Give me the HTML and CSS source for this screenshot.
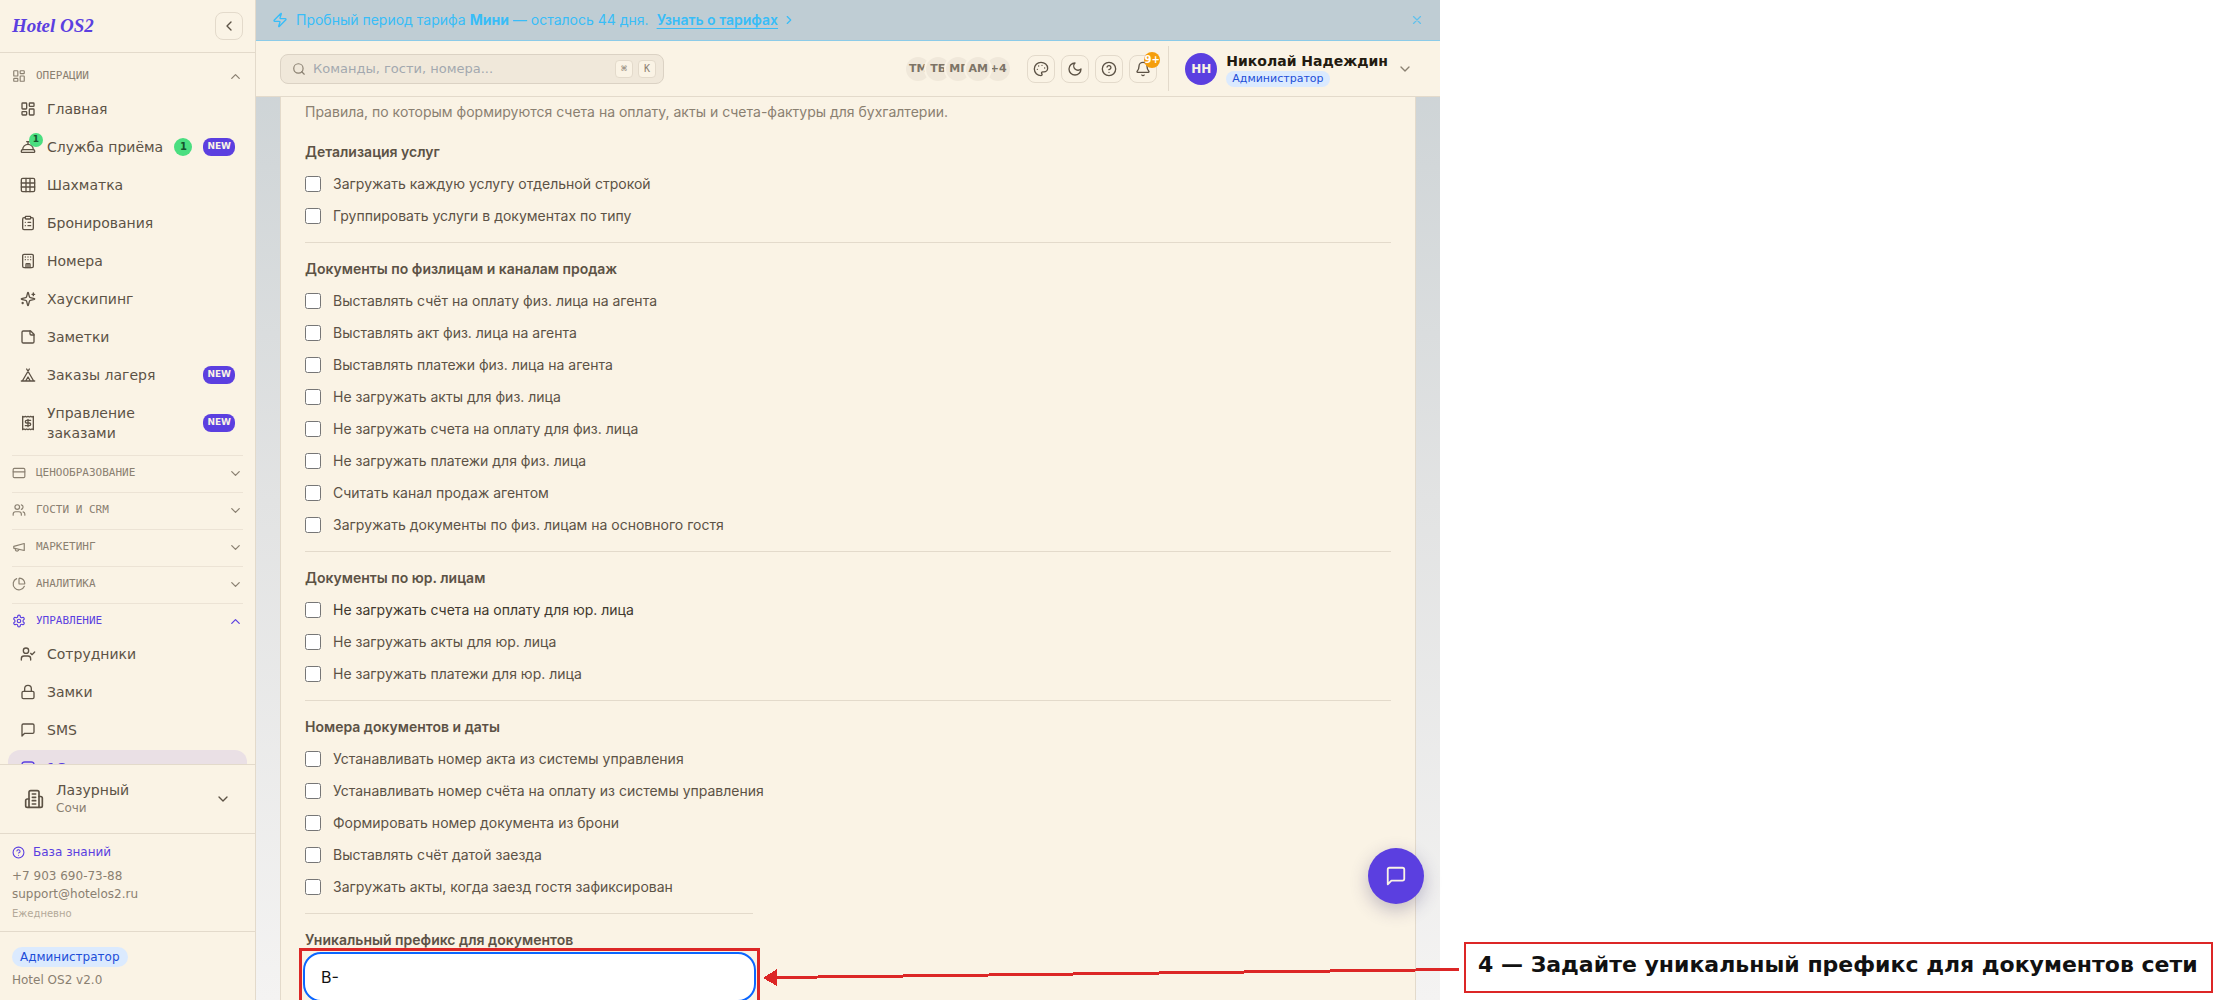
FILE: index.html
```
<!DOCTYPE html>
<html lang="ru">

<head>
    <meta charset="UTF-8" />
    <meta name="viewport" content="width=device-width, initial-scale=1.0" />
    <title>Hotel OS2</title>
    <link rel="stylesheet" href="styles.css">
</head>

<body>
    <svg class="sprite" aria-hidden="true">
        <symbol id="i-dashboard" viewBox="0 0 24 24"><rect x="3" y="3" width="7" height="9" rx="1"/><rect x="14" y="3" width="7" height="5" rx="1"/><rect x="14" y="12" width="7" height="9" rx="1"/><rect x="3" y="16" width="7" height="5" rx="1"/></symbol>
        <symbol id="i-bell-desk" viewBox="0 0 24 24"><path d="M3 20a1 1 0 0 1-1-1v-1a2 2 0 0 1 2-2h16a2 2 0 0 1 2 2v1a1 1 0 0 1-1 1Z"/><path d="M20 16a8 8 0 1 0-16 0"/><path d="M12 4v4"/><path d="M10 4h4"/></symbol>
        <symbol id="i-grid" viewBox="0 0 24 24"><rect x="2" y="2" width="20" height="20" rx="2"/><path d="M2 9h20M2 15h20M9 2v20M15 2v20"/></symbol>
        <symbol id="i-clipboard" viewBox="0 0 24 24"><rect x="8" y="2" width="8" height="4" rx="1"/><path d="M16 4h2a2 2 0 0 1 2 2v14a2 2 0 0 1-2 2H6a2 2 0 0 1-2-2V6a2 2 0 0 1 2-2h2"/><path d="M12 11h4M12 16h4M8 11h.01M8 16h.01"/></symbol>
        <symbol id="i-hotel" viewBox="0 0 24 24"><rect x="4" y="2" width="16" height="20" rx="2"/><path d="M9 22v-5a1 1 0 0 1 1-1h4a1 1 0 0 1 1 1v5M12 16v6M8 6h.01M12 6h.01M16 6h.01M8 10h.01M12 10h.01M16 10h.01"/></symbol>
        <symbol id="i-sparkles" viewBox="0 0 24 24"><path d="M9.94 15.5A2 2 0 0 0 8.5 14.06l-6.13-1.58a.5.5 0 0 1 0-.96L8.5 9.94A2 2 0 0 0 9.94 8.5l1.58-6.13a.5.5 0 0 1 .96 0l1.58 6.13a2 2 0 0 0 1.44 1.44l6.13 1.58a.5.5 0 0 1 0 .96l-6.13 1.58a2 2 0 0 0-1.44 1.44l-1.58 6.13a.5.5 0 0 1-.96 0z"/><path d="M20 3v4M22 5h-4M4 17v2M5 18H3"/></symbol>
        <symbol id="i-note" viewBox="0 0 24 24"><path d="M16 3H5a2 2 0 0 0-2 2v14a2 2 0 0 0 2 2h14a2 2 0 0 0 2-2V8Z"/><path d="M15 3v4a2 2 0 0 0 2 2h4"/></symbol>
        <symbol id="i-tent" viewBox="0 0 24 24"><path d="M3.5 21 14 3M20.5 21 10 3M15.5 21 12 15l-3.5 6M2 21h20"/></symbol>
        <symbol id="i-receipt" viewBox="0 0 24 24"><path d="M4 2v20l2-1 2 1 2-1 2 1 2-1 2 1 2-1 2 1V2l-2 1-2-1-2 1-2-1-2 1-2-1-2 1Z"/><path d="M16 8h-6a2 2 0 1 0 0 4h4a2 2 0 1 1 0 4H8M12 17.500V6.500"/></symbol>
        <symbol id="i-card" viewBox="0 0 24 24"><rect x="2" y="4" width="20" height="16" rx="2"/><path d="M2 10h20"/></symbol>
        <symbol id="i-users" viewBox="0 0 24 24"><path d="M16 21v-2a4 4 0 0 0-4-4H6a4 4 0 0 0-4 4v2"/><circle cx="9" cy="7" r="4"/><path d="M22 21v-2a4 4 0 0 0-3-3.870M16 3.130a4 4 0 0 1 0 7.750"/></symbol>
        <symbol id="i-megaphone" viewBox="0 0 24 24"><path d="m3 11 18-5v12L3 14v-3z"/><path d="M11.600 16.800a3 3 0 1 1-5.800-1.600"/></symbol>
        <symbol id="i-pie" viewBox="0 0 24 24"><path d="M21 12c.55 0 1-.45.95-1a10 10 0 0 0-8.950-8.950c-.55-.06-1 .4-1 .95v8a1 1 0 0 0 1 1z"/><path d="M21.210 15.890A10 10 0 1 1 8 2.830"/></symbol>
        <symbol id="i-gear" viewBox="0 0 24 24"><path d="M12.220 2h-.44a2 2 0 0 0-2 2v.18a2 2 0 0 1-1 1.730l-.43.25a2 2 0 0 1-2 0l-.15-.08a2 2 0 0 0-2.730.73l-.22.38a2 2 0 0 0 .73 2.730l.15.1a2 2 0 0 1 1 1.720v.51a2 2 0 0 1-1 1.740l-.15.09a2 2 0 0 0-.73 2.730l.22.38a2 2 0 0 0 2.730.73l.15-.08a2 2 0 0 1 2 0l.43.25a2 2 0 0 1 1 1.730V20a2 2 0 0 0 2 2h.44a2 2 0 0 0 2-2v-.18a2 2 0 0 1 1-1.730l.43-.25a2 2 0 0 1 2 0l.15.08a2 2 0 0 0 2.730-.73l.22-.39a2 2 0 0 0-.73-2.730l-.15-.08a2 2 0 0 1-1-1.740v-.5a2 2 0 0 1 1-1.740l.15-.09a2 2 0 0 0 .73-2.730l-.22-.38a2 2 0 0 0-2.730-.73l-.15.08a2 2 0 0 1-2 0l-.43-.25a2 2 0 0 1-1-1.730V4a2 2 0 0 0-2-2z"/><circle cx="12" cy="12" r="3"/></symbol>
        <symbol id="i-user-check" viewBox="0 0 24 24"><path d="M16 21v-2a4 4 0 0 0-4-4H6a4 4 0 0 0-4 4v2"/><circle cx="9" cy="7" r="4"/><path d="m16 11 2 2 4-4"/></symbol>
        <symbol id="i-lock" viewBox="0 0 24 24"><rect x="3" y="11" width="18" height="11" rx="2"/><path d="M7 11V7a5 5 0 0 1 10 0v4"/></symbol>
        <symbol id="i-message" viewBox="0 0 24 24"><path d="M21 15a2 2 0 0 1-2 2H7l-4 4V5a2 2 0 0 1 2-2h14a2 2 0 0 1 2 2z"/></symbol>
        <symbol id="i-database" viewBox="0 0 24 24"><rect x="3" y="3" width="18" height="18" rx="4"/><path d="M3 12h18"/></symbol>
        <symbol id="i-building" viewBox="0 0 24 24"><path d="M6 22V4a2 2 0 0 1 2-2h8a2 2 0 0 1 2 2v18Z"/><path d="M6 12H4a2 2 0 0 0-2 2v6a2 2 0 0 0 2 2h2M18 9h2a2 2 0 0 1 2 2v9a2 2 0 0 1-2 2h-2M10 6h4M10 10h4M10 14h4M10 18h4"/></symbol>
        <symbol id="i-help" viewBox="0 0 24 24"><circle cx="12" cy="12" r="10"/><path d="M9.090 9a3 3 0 0 1 5.830 1c0 2-3 3-3 3M12 17h.01"/></symbol>
        <symbol id="i-up" viewBox="0 0 24 24"><path d="m18 15-6-6-6 6"/></symbol>
        <symbol id="i-down" viewBox="0 0 24 24"><path d="m6 9 6 6 6-6"/></symbol>
        <symbol id="i-left" viewBox="0 0 24 24"><path d="m15 18-6-6 6-6"/></symbol>
        <symbol id="i-right" viewBox="0 0 24 24"><path d="m9 18 6-6-6-6"/></symbol>
        <symbol id="i-close" viewBox="0 0 24 24"><path d="M18 6 6 18M6 6l12 12"/></symbol>
        <symbol id="i-zap" viewBox="0 0 24 24"><path d="M4 14a1 1 0 0 1-.78-1.630l9.900-10.200a.5.5 0 0 1 .86.46l-1.920 6.020A1 1 0 0 0 13 10h7a1 1 0 0 1 .78 1.630l-9.900 10.200a.5.5 0 0 1-.86-.46l1.920-6.020A1 1 0 0 0 11 14z"/></symbol>
        <symbol id="i-search" viewBox="0 0 24 24"><circle cx="11" cy="11" r="8"/><path d="m21 21-4.300-4.300"/></symbol>
        <symbol id="i-palette" viewBox="0 0 24 24"><path d="M12 2C6.500 2 2 6.500 2 12s4.500 10 10 10c.93 0 1.650-.75 1.650-1.690 0-.44-.18-.83-.44-1.120-.29-.29-.44-.65-.44-1.130a1.640 1.640 0 0 1 1.670-1.670h2c3.050 0 5.550-2.500 5.550-5.550C21.970 6.010 17.460 2 12 2z"/><path d="M13.500 6.500h.01M17.500 10.500h.01M8.500 7.500h.01M6.500 12.500h.01"/></symbol>
        <symbol id="i-moon" viewBox="0 0 24 24"><path d="M12 3a6 6 0 0 0 9 9 9 9 0 1 1-9-9Z"/></symbol>
        <symbol id="i-bell" viewBox="0 0 24 24"><path d="M10.270 21a2 2 0 0 0 3.460 0M3.260 15.330A1 1 0 0 0 4 17h16a1 1 0 0 0 .74-1.670C19.410 13.960 18 12.500 18 8A6 6 0 0 0 6 8c0 4.500-1.410 5.960-2.740 7.330"/></symbol>
    </svg>

    <div class="page">
        <div class="app">
            <aside class="sidebar">
                <div class="brand">
                    <a href="#" class="logo">Hotel OS2</a>
                    <button type="button" class="collapse-btn" aria-label="Свернуть меню"><svg class="icon"><use href="#i-left"/></svg></button>
                </div>

                <nav class="menu">
                    <div class="menu-section">
                        <button type="button" class="section-btn"><svg class="icon"><use href="#i-dashboard"/></svg><span>ОПЕРАЦИИ</span><svg class="icon arrow"><use href="#i-up"/></svg></button>
                        <a href="#" class="menu-item"><svg class="icon"><use href="#i-dashboard"/></svg><span>Главная</span></a>
                        <a href="#" class="menu-item"><svg class="icon"><use href="#i-bell-desk"/></svg><i class="dot">1</i><span>Служба приёма</span><b class="count">1</b><b class="new">NEW</b></a>
                        <a href="#" class="menu-item"><svg class="icon"><use href="#i-grid"/></svg><span>Шахматка</span></a>
                        <a href="#" class="menu-item"><svg class="icon"><use href="#i-clipboard"/></svg><span>Бронирования</span></a>
                        <a href="#" class="menu-item"><svg class="icon"><use href="#i-hotel"/></svg><span>Номера</span></a>
                        <a href="#" class="menu-item"><svg class="icon"><use href="#i-sparkles"/></svg><span>Хаускипинг</span></a>
                        <a href="#" class="menu-item"><svg class="icon"><use href="#i-note"/></svg><span>Заметки</span></a>
                        <a href="#" class="menu-item"><svg class="icon"><use href="#i-tent"/></svg><span>Заказы лагеря</span><b class="new">NEW</b></a>
                        <a href="#" class="menu-item"><svg class="icon"><use href="#i-receipt"/></svg><span>Управление заказами</span><b class="new">NEW</b></a>
                    </div>
                    <div class="menu-section">
                        <button type="button" class="section-btn"><svg class="icon"><use href="#i-card"/></svg><span>ЦЕНООБРАЗОВАНИЕ</span><svg class="icon arrow"><use href="#i-down"/></svg></button>
                    </div>
                    <div class="menu-section">
                        <button type="button" class="section-btn"><svg class="icon"><use href="#i-users"/></svg><span>ГОСТИ И CRM</span><svg class="icon arrow"><use href="#i-down"/></svg></button>
                    </div>
                    <div class="menu-section">
                        <button type="button" class="section-btn"><svg class="icon"><use href="#i-megaphone"/></svg><span>МАРКЕТИНГ</span><svg class="icon arrow"><use href="#i-down"/></svg></button>
                    </div>
                    <div class="menu-section">
                        <button type="button" class="section-btn"><svg class="icon"><use href="#i-pie"/></svg><span>АНАЛИТИКА</span><svg class="icon arrow"><use href="#i-down"/></svg></button>
                    </div>
                    <div class="menu-section">
                        <button type="button" class="section-btn current"><svg class="icon"><use href="#i-gear"/></svg><span>УПРАВЛЕНИЕ</span><svg class="icon arrow"><use href="#i-up"/></svg></button>
                        <a href="#" class="menu-item"><svg class="icon"><use href="#i-user-check"/></svg><span>Сотрудники</span></a>
                        <a href="#" class="menu-item"><svg class="icon"><use href="#i-lock"/></svg><span>Замки</span></a>
                        <a href="#" class="menu-item"><svg class="icon"><use href="#i-message"/></svg><span>SMS</span></a>
                        <a href="#" class="menu-item active"><svg class="icon"><use href="#i-database"/></svg><span>1С</span></a>
                    </div>
                </nav>

                <button type="button" class="hotel-btn">
                    <svg class="icon"><use href="#i-building"/></svg>
                    <span class="hotel-name">Лазурный<small>Сочи</small></span>
                    <svg class="icon arrow"><use href="#i-down"/></svg>
                </button>

                <div class="support">
                    <a href="#" class="kb-link"><svg class="icon"><use href="#i-help"/></svg>База знаний</a>
                    <a href="tel:+79036907388">+7 903 690-73-88</a>
                    <a href="mailto:support@hotelos2.ru">support@hotelos2.ru</a>
                    <small>Ежедневно</small>
                </div>

                <div class="version">
                    <span class="role">Администратор</span>
                    <span>Hotel OS2 v2.0</span>
                </div>
            </aside>

            <div class="content">
                <div class="trial">
                    <svg class="icon"><use href="#i-zap"/></svg>
                    <span>Пробный период тарифа <b>Мини</b> — осталось 44 дня.</span>
                    <a href="#">Узнать о тарифах</a>
                    <svg class="icon trial-arrow"><use href="#i-right"/></svg>
                    <button type="button" aria-label="Закрыть"><svg class="icon"><use href="#i-close"/></svg></button>
                </div>

                <header class="topbar">
                    <div class="search">
                        <svg class="icon"><use href="#i-search"/></svg>
                        <input type="text" aria-label="Поиск" placeholder="Команды, гости, номера..." />
                        <kbd>⌘</kbd>
                        <kbd>K</kbd>
                    </div>
                    <div class="people">
                        <span>ТМ</span><span>ТБ</span><span>МГ</span><span class="front">АМ</span><span>+4</span>
                    </div>
                    <div class="tools">
                        <button type="button" aria-label="Тема"><svg class="icon"><use href="#i-palette"/></svg></button>
                        <button type="button" aria-label="Ночной режим"><svg class="icon"><use href="#i-moon"/></svg></button>
                        <button type="button" aria-label="Помощь"><svg class="icon"><use href="#i-help"/></svg></button>
                        <button type="button" aria-label="Уведомления"><svg class="icon"><use href="#i-bell"/></svg><i class="alert">9+</i></button>
                    </div>
                    <button type="button" class="user">
                        <span class="avatar">НН</span>
                        <span class="user-info"><b>Николай Надеждин</b><span class="role">Администратор</span></span>
                        <svg class="icon"><use href="#i-down"/></svg>
                    </button>
                </header>

                <main class="workspace">
                    <form class="card">
                        <p class="intro">Правила, по которым формируются счета на оплату, акты и счета-фактуры для бухгалтерии.</p>

                        <fieldset>
                            <legend>Детализация услуг</legend>
                            <label><input type="checkbox" />Загружать каждую услугу отдельной строкой</label>
                            <label><input type="checkbox" />Группировать услуги в документах по типу</label>
                        </fieldset>

                        <fieldset>
                            <legend>Документы по физлицам и каналам продаж</legend>
                            <label><input type="checkbox" />Выставлять счёт на оплату физ. лица на агента</label>
                            <label><input type="checkbox" />Выставлять акт физ. лица на агента</label>
                            <label><input type="checkbox" />Выставлять платежи физ. лица на агента</label>
                            <label><input type="checkbox" />Не загружать акты для физ. лица</label>
                            <label><input type="checkbox" />Не загружать счета на оплату для физ. лица</label>
                            <label><input type="checkbox" />Не загружать платежи для физ. лица</label>
                            <label><input type="checkbox" />Считать канал продаж агентом</label>
                            <label><input type="checkbox" />Загружать документы по физ. лицам на основного гостя</label>
                        </fieldset>

                        <fieldset>
                            <legend>Документы по юр. лицам</legend>
                            <label class="hovered"><input type="checkbox" />Не загружать счета на оплату для юр. лица</label>
                            <label><input type="checkbox" />Не загружать акты для юр. лица</label>
                            <label><input type="checkbox" />Не загружать платежи для юр. лица</label>
                        </fieldset>

                        <fieldset>
                            <legend>Номера документов и даты</legend>
                            <label><input type="checkbox" />Устанавливать номер акта из системы управления</label>
                            <label><input type="checkbox" />Устанавливать номер счёта на оплату из системы управления</label>
                            <label><input type="checkbox" />Формировать номер документа из брони</label>
                            <label><input type="checkbox" />Выставлять счёт датой заезда</label>
                            <label><input type="checkbox" />Загружать акты, когда заезд гостя зафиксирован</label>
                        </fieldset>

                        <div class="prefix">
                            <label for="prefix">Уникальный префикс для документов</label>
                            <div class="prefix-field">
                                <input type="text" id="prefix" value="В-" />
                            </div>
                        </div>
                    </form>
                </main>

                <button type="button" class="chat-btn" aria-label="Чат"><svg class="icon"><use href="#i-message"/></svg></button>
            </div>
        </div>

        <aside class="notes">
            <svg class="pointer" viewBox="0 0 696 18" preserveAspectRatio="none" aria-hidden="true">
                <path d="M12 9.500 696 1.500" />
                <polygon points="0,10 14,1 14,18" />
            </svg>
            <p class="note">4 — Задайте уникальный префикс для документов сети</p>
        </aside>
    </div>
</body>

</html>
```
FILE: styles.css
```
* {
    box-sizing: border-box;
}

body {
    margin: 0;
    background: #fff;
    color: #5c5245;
    font-family: "DejaVu Sans", sans-serif;
    font-size: 14px;
    line-height: 20px;
}

a {
    color: inherit;
    text-decoration: none;
}

button {
    font: inherit;
    color: inherit;
    background: none;
    border: none;
    padding: 0;
    cursor: pointer;
}

.sprite {
    display: none;
}

.icon {
    width: 16px;
    height: 16px;
    flex: none;
    fill: none;
    stroke: currentColor;
    stroke-width: 2;
    stroke-linecap: round;
    stroke-linejoin: round;
}

.page {
    position: relative;
    display: flex;
    height: 100vh;
    overflow: hidden;
}

.app {
    flex: 1;
    min-width: 0;
    display: flex;
}

/* Sidebar */

.sidebar {
    width: 256px;
    flex: none;
    display: flex;
    flex-direction: column;
    background: #faf3e5;
    border-right: 1px solid #e3dacb;
}

.brand {
    display: flex;
    align-items: center;
    justify-content: space-between;
    height: 53px;
    flex: none;
    padding: 0 12px;
    border-bottom: 1px solid #e3dacb;
}

.logo {
    color: #5b3fe0;
    font-family: "Liberation Serif", serif;
    font-size: 19px;
    font-weight: bold;
    font-style: italic;
}

.collapse-btn {
    display: flex;
    align-items: center;
    justify-content: center;
    width: 28px;
    height: 28px;
    border: 1px solid #e3dacb;
    border-radius: 8px;
}

.menu {
    flex: 1;
    min-height: 0;
    overflow: hidden;
    padding: 8px 8px 0;
}

.menu-section {
    padding: 2px 0 4px;
}

.menu-section:first-child {
    padding-top: 0;
}

.menu-section + .menu-section {
    margin: 0 4px;
    border-top: 1px solid #ece3d5;
}

.menu-section + .menu-section .section-btn {
    padding: 0;
}

.menu-section + .menu-section .menu-item {
    margin-left: -4px;
    margin-right: -4px;
}

.section-btn {
    display: flex;
    align-items: center;
    gap: 10px;
    width: 100%;
    height: 30px;
    padding: 0 4px;
    color: #8a8071;
    font-family: "DejaVu Sans Mono", monospace;
    font-size: 11px;
    text-align: left;
}

.section-btn .icon {
    width: 14px;
    height: 14px;
}

.section-btn .arrow {
    width: 15px;
    height: 15px;
    margin-left: auto;
}

.section-btn.current {
    color: #5b3fe0;
}

.menu-item {
    position: relative;
    display: flex;
    align-items: center;
    gap: 11px;
    min-height: 36px;
    margin-bottom: 2px;
    padding: 8px 12px;
    border-radius: 12px;
}

.menu-item:last-child {
    margin-bottom: 0;
}

.menu-item span {
    flex: 1;
}

.menu-item.active {
    background: #eae0e5;
    color: #5b3fe0;
}

.dot {
    position: absolute;
    top: 4px;
    left: 21px;
    width: 14px;
    height: 14px;
    border-radius: 7px;
    background: #4ade80;
    color: #14532d;
    font-size: 9px;
    font-style: normal;
    font-weight: bold;
    line-height: 12px;
    text-align: center;
}

.count {
    width: 18px;
    height: 18px;
    border-radius: 9px;
    background: #4ade80;
    color: #14532d;
    font-size: 10px;
    line-height: 18px;
    text-align: center;
}

.new {
    height: 18px;
    padding: 0 4px;
    border-radius: 8px;
    background: #5b3fe0;
    color: #faf3e5;
    font-size: 9px;
    line-height: 16px;
}

.hotel-btn {
    display: flex;
    align-items: center;
    gap: 12px;
    height: 70px;
    flex: none;
    padding: 0 24px;
    border-top: 1px solid #e3dacb;
    border-bottom: 1px solid #e3dacb;
    text-align: left;
}

.hotel-btn .icon {
    width: 20px;
    height: 20px;
}

.hotel-btn .arrow {
    width: 16px;
    height: 16px;
}

.hotel-name {
    flex: 1;
    line-height: 18px;
}

small {
    display: block;
    color: #8a8071;
    font-size: 12px;
}

.support {
    height: 98px;
    flex: none;
    padding: 9px 12px 0;
    border-bottom: 1px solid #e3dacb;
    color: #8a8071;
    font-size: 12px;
    line-height: 18px;
}

.support a {
    display: block;
}

.support .kb-link {
    display: flex;
    align-items: center;
    gap: 8px;
    margin-bottom: 6px;
    color: #5b3fe0;
}

.kb-link .icon {
    width: 13px;
    height: 13px;
}

.support small {
    margin-top: 2px;
    color: #b3a999;
    font-size: 10px;
}

.version {
    display: flex;
    flex-direction: column;
    align-items: flex-start;
    gap: 4px;
    height: 68px;
    flex: none;
    padding: 15px 12px 0;
    color: #8a8071;
    font-size: 12px;
    line-height: 18px;
}

.role {
    padding: 1px 8px;
    border-radius: 10px;
    background: #dbeafe;
    color: #1d4ed8;
    font-size: 12px;
    line-height: 18px;
}

/* Trial banner */

.content {
    position: relative;
    flex: 1;
    min-width: 0;
    display: flex;
    flex-direction: column;
    background: linear-gradient(#cad1d4, #e2e3e3 50%, #f4f3f2);
}

.trial {
    display: flex;
    align-items: center;
    height: 41px;
    flex: none;
    padding: 0 16px;
    border-bottom: 1px solid #8ccbe8;
    background: #bfcdd4;
    color: #38bdf8;
    font-family: Inter, sans-serif;
}

.trial span {
    margin-left: 8px;
}

.trial a {
    margin-left: 8px;
    font-weight: 600;
    text-decoration: underline;
    text-underline-offset: 3px;
}

.trial .trial-arrow {
    width: 14px;
    height: 14px;
    margin-left: 4px;
}

.trial button {
    display: flex;
    margin-left: auto;
    opacity: 0.7;
}

.trial button .icon {
    width: 14px;
    height: 14px;
}

/* Top bar */

.topbar {
    display: flex;
    align-items: center;
    height: 56px;
    flex: none;
    padding: 0 27px 0 24px;
    background: #faf3e5;
    border-bottom: 1px solid #e3dacb;
}

.search {
    display: flex;
    align-items: center;
    gap: 5px;
    width: 384px;
    height: 30px;
    padding: 0 7px 0 11px;
    border: 1px solid #dbd2c4;
    border-radius: 8px;
    background: #f0e8da;
    color: #8a8071;
}

.search .icon {
    width: 14px;
    height: 14px;
}

.search input {
    flex: 1;
    min-width: 0;
    padding: 0 2px;
    border: none;
    background: none;
    font-family: "DejaVu Sans", sans-serif;
    font-size: 13px;
    outline: none;
}

.search input::placeholder {
    color: #a3a8af;
}

.search kbd {
    width: 18px;
    height: 18px;
    border: 1px solid #e3dacb;
    border-radius: 4px;
    background: #faf3e5;
    font-family: "DejaVu Sans Mono", monospace;
    font-size: 10px;
    line-height: 16px;
    text-align: center;
}

.people {
    display: flex;
    margin-left: auto;
}

.people span {
    position: relative;
    display: flex;
    justify-content: center;
    width: 24px;
    height: 24px;
    margin-left: -4px;
    border-radius: 50%;
    background: #f0e8da;
    box-shadow: 0 0 0 2px #faf3e5;
    color: #7d7466;
    font-size: 11px;
    font-weight: bold;
    line-height: 23px;
}

.people .front {
    z-index: 1;
}

.tools {
    display: flex;
    gap: 6px;
    margin-left: 17px;
}

.tools button {
    position: relative;
    display: flex;
    align-items: center;
    justify-content: center;
    width: 28px;
    height: 28px;
    border: 1px solid #e3dacb;
    border-radius: 8px;
}

.alert {
    position: absolute;
    top: -4px;
    right: -4px;
    width: 16px;
    height: 16px;
    border-radius: 50%;
    background: #f59e0b;
    color: #fff;
    font-size: 10px;
    font-style: normal;
    font-weight: bold;
    line-height: 16px;
    display: flex;
    justify-content: center;
}

.user {
    display: flex;
    align-items: center;
    gap: 9px;
    height: 45px;
    margin-left: 11px;
    padding-left: 16px;
    border-left: 1px solid #e3dacb;
    text-align: left;
}

.user .icon {
    color: #8a8071;
}

.avatar {
    width: 32px;
    height: 32px;
    border-radius: 50%;
    background: #5b3fe0;
    color: #faf3e5;
    font-size: 12px;
    font-weight: bold;
    line-height: 32px;
    text-align: center;
}

.user-info {
    display: flex;
    flex-direction: column;
    align-items: flex-start;
    color: #231b10;
    line-height: 20px;
}

.user-info .role {
    padding: 0 6px;
    font-size: 11px;
    line-height: 16px;
}

/* Settings card */

.workspace {
    flex: 1;
    min-height: 0;
    overflow: hidden;
    padding: 0 24px;
    font-family: Inter, sans-serif;
}

.card {
    min-height: 100%;
    padding: 5px 24px 24px;
    border: 1px solid #e3dacb;
    border-top: none;
    background: #faf3e5;
}

.intro {
    margin: 0 0 20px;
    color: #8a8071;
}

fieldset {
    display: flex;
    flex-direction: column;
    gap: 12px;
    margin: 0 0 16px;
    padding: 0 0 16px;
    border: none;
    border-bottom: 1px solid #e3dacb;
}

fieldset:last-of-type {
    border-bottom: none;
    margin: 0;
}

legend {
    margin-bottom: 12px;
    padding: 0;
    font-weight: 600;
}

fieldset label {
    display: flex;
    align-items: center;
    gap: 12px;
}

fieldset input {
    width: 16px;
    height: 16px;
    margin: 0;
}

.hovered {
    color: #3f382e;
}

.prefix {
    width: 448px;
    max-width: 100%;
    padding-top: 16px;
    border-top: 1px solid #e3dacb;
}

.prefix label {
    display: block;
    font-weight: 600;
}

.prefix-field {
    margin: -2px -7px 0 -6px;
    padding: 1px;
    border: 3px solid #dc2626;
}

.prefix-field input {
    display: block;
    width: 100%;
    height: 50px;
    padding: 0 16px;
    border: 2px solid #0b66ff;
    border-radius: 18px;
    background: #fff;
    color: #111;
    font-family: Inter, sans-serif;
    font-size: 16px;
    outline: none;
}

.chat-btn {
    position: absolute;
    right: 16px;
    bottom: 96px;
    display: flex;
    align-items: center;
    justify-content: center;
    width: 56px;
    height: 56px;
    border-radius: 50%;
    background: #5b3fe0;
    color: #faf3e5;
    box-shadow: 0 6px 18px rgba(60, 50, 110, 0.3);
}

.chat-btn .icon {
    width: 22px;
    height: 22px;
}

/* Callout beside the app */

.notes {
    flex: none;
    display: flex;
    align-items: flex-end;
    width: 796px;
    padding: 0 23px 7px 24px;
}

.pointer {
    position: absolute;
    left: 763px;
    bottom: 14px;
    width: 696px;
    height: 18px;
    fill: #dc2626;
    overflow: visible;
    shape-rendering: crispEdges;
}

.pointer path {
    stroke: #dc2626;
    stroke-width: 3;
}

.note {
    flex: 1;
    margin: 0;
    padding: 9px 12px 14px;
    border: 2px solid #dc2626;
    color: #111;
    font-size: 22px;
    font-weight: bold;
    line-height: 24px;
    white-space: nowrap;
}
```
